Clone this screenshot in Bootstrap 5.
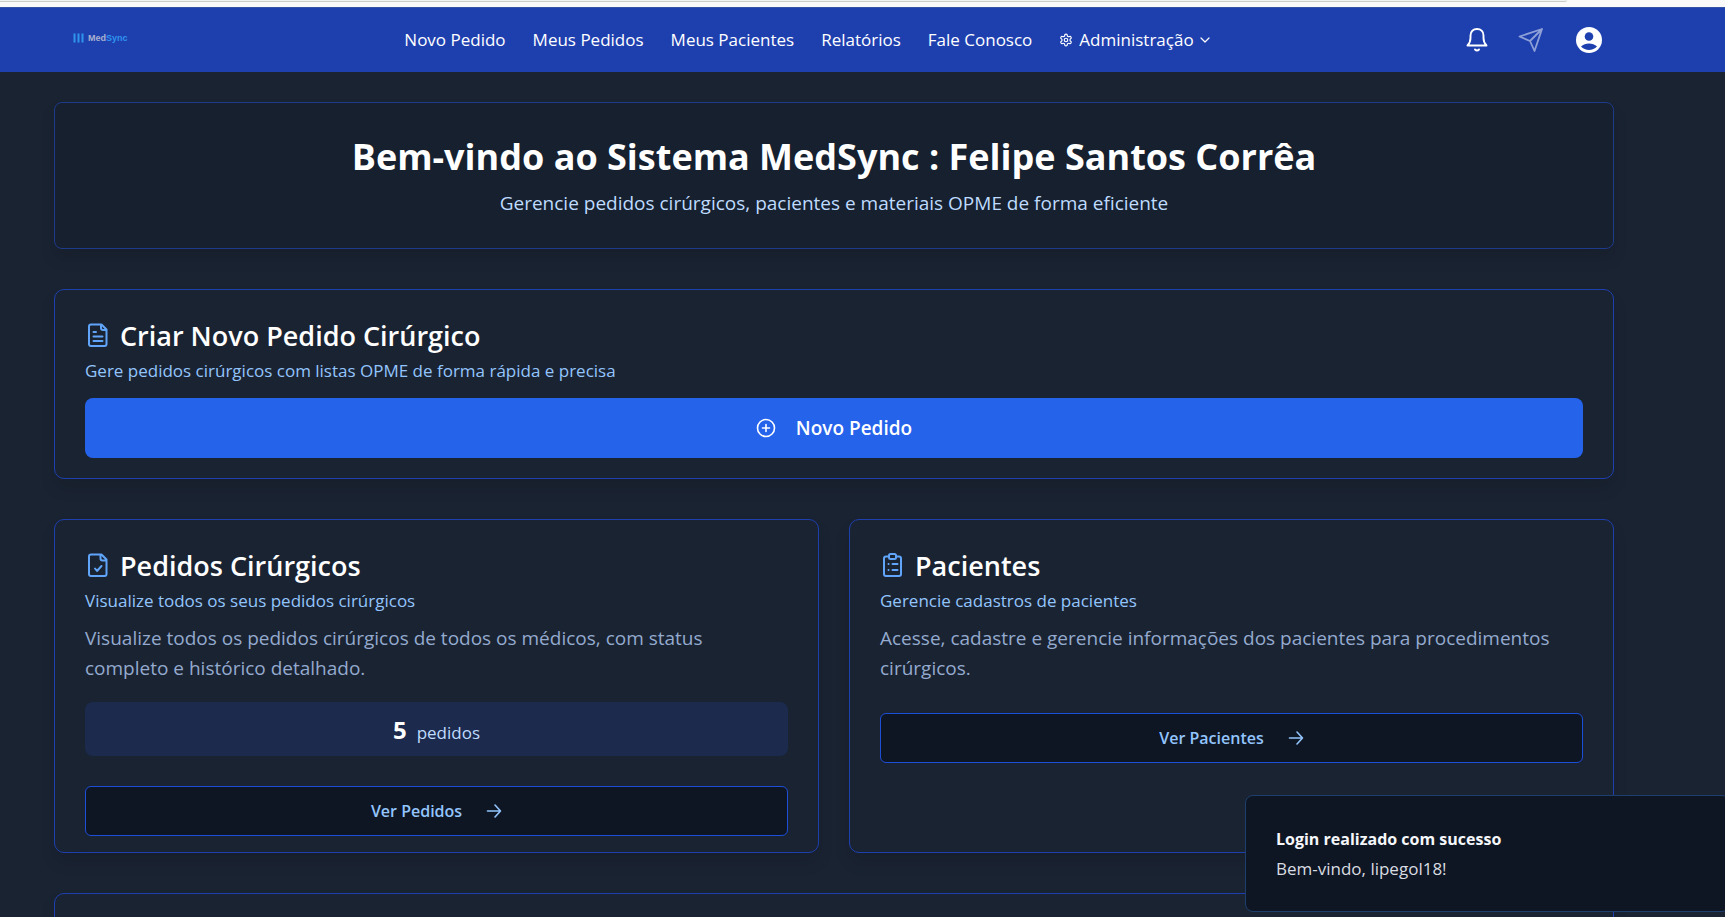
<!DOCTYPE html>
<html lang="pt-BR">
<head>
<meta charset="utf-8">
<meta name="viewport" content="width=device-width, initial-scale=1">
<title>MedSync</title>
<link href="https://cdn.jsdelivr.net/npm/bootstrap@5.3.0/dist/css/bootstrap.min.css" rel="stylesheet">
<style>
  body { background: #1a2332; color: #fff; font-family: "Open Sans", "Noto Sans", sans-serif; font-size: 17px; line-height: 24px; overflow: hidden; }
  svg { fill: none; stroke: currentColor; stroke-linecap: round; stroke-linejoin: round; flex-shrink: 0; }
  svg.solid { stroke: none; }
  .tab-strip { height: 7px; background: #f8f9f8; }
  .tab-line { height: 2px; margin-right: 158px; border-bottom: 1px solid #c9cdc9; background: #f1f3f1; border-bottom-right-radius: 8px; }
  .topbar { background: #1e40af; height: 65px; padding: 0 123px 0 73px; border-top: 1px solid #3451a8; }
  .brand { font: bold 9px/12px "Liberation Sans", sans-serif; color: #a9b2cf; text-decoration: none; gap: 4px; width: 77px; padding-bottom: 4px; }
  .brand span span { color: #2f94ee; }
  .menu { gap: 27px; }
  .menu .nav-link, .menu button { color: #fff; padding: 0; white-space: nowrap; }
  .menu button { background: none; border: 0; gap: 6px; }
  .tools { gap: 28px; }
  .tools button { background: none; border: 0; padding: 0; color: #fff; line-height: 0; }
  .tools .send { color: #8fa0d7; }
  main { padding: 30px 111px 0 54px; }
  .panel { border: 1px solid #1e40af; border-radius: 10px; padding: 30px 30px 20px; box-shadow: 0 10px 15px rgba(0,0,0,.1); background: #1a2332; color: #fff; margin-bottom: 40px; }
  .hero { background: #16202e; border-color: #1e3a8a; border-radius: 8px; padding: 30px; height: 147px; }
  .hero h1 { font-size: 36px; line-height: 48px; font-weight: 700; margin: 0 0 10px; }
  .hero p { font-size: 19px; line-height: 24px; color: #bfdbfe; margin: 0; }
  .panel h2 { font-size: 27px; line-height: 32px; font-weight: 600; margin: 0; gap: 9px; color: #fff; }
  .panel h2 svg { color: #60a5fa; margin-bottom: 2px; }
  .hint { color: #93c5fd; margin: 7px 0 0; }
  .desc { color: #94aace; font-size: 19px; line-height: 30px; margin: 10px 0 0; }
  .btn-new { background: #2563eb; color: #fff; font-size: 19px; font-weight: 600; height: 60px; border-radius: 8px; gap: 20px; margin-top: 15px; }
  .btn-new:hover { background: #1d4ed8; color: #fff; }
  .btn-go { background: #0f1623; color: #93c5fd; border: 1px solid #1d4ed8; font-size: 16px; font-weight: 600; height: 50px; border-radius: 6px; gap: 24px; margin-top: 30px; }
  .btn-go:hover { background: #16203a; color: #93c5fd; }
  .tally { background: #1c2a4e; border-radius: 8px; height: 54px; margin-top: 19px; gap: 10px; color: #bfdbfe; }
  .tally strong { font-size: 24px; font-weight: 700; color: #fff; }
  .pair { --bs-gutter-x: 30px; }
  .pair .panel { height: 334px; }
  .notice { position: fixed; right: -5px; bottom: 5px; width: 485px; height: 117px; background: #0f1623; border: 1px solid #1e3f6e; border-radius: 8px; padding: 28px 30px; line-height: 30px; color: #d9dce1; }
  .notice strong { font-size: 16px; font-weight: 700; color: #f5f7fa; }
</style>
</head>
<body>
<div class="tab-strip"><div class="tab-line"></div></div>
<header class="topbar d-flex align-items-center justify-content-between">
  <a href="#" class="brand d-flex align-items-center">
    <svg class="solid" width="11" height="10" viewBox="0 0 11 10"><path fill="#2f94ee" d="M.5 0.500h2v9h-2zM4.500 0.500h2v9h-2zM8.500 0.500h2v9h-2z"/></svg>
    <span>Med<span>Sync</span></span></a>
  <nav class="menu nav align-items-center flex-nowrap">
    <a class="nav-link" href="#">Novo Pedido</a>
    <a class="nav-link" href="#">Meus Pedidos</a>
    <a class="nav-link" href="#">Meus Pacientes</a>
    <a class="nav-link" href="#">Relatórios</a>
    <a class="nav-link" href="#">Fale Conosco</a>
    <button type="button" class="d-flex align-items-center">
      <svg width="14" height="14" viewBox="0 0 24 24" stroke-width="2"><path d="M12.22 2h-.44a2 2 0 0 0-2 2v.18a2 2 0 0 1-1 1.730l-.43.25a2 2 0 0 1-2 0l-.15-.08a2 2 0 0 0-2.730.73l-.22.38a2 2 0 0 0 .73 2.730l.15.1a2 2 0 0 1 1 1.720v.51a2 2 0 0 1-1 1.740l-.15.09a2 2 0 0 0-.73 2.730l.22.38a2 2 0 0 0 2.730.73l.15-.08a2 2 0 0 1 2 0l.43.25a2 2 0 0 1 1 1.730V20a2 2 0 0 0 2 2h.44a2 2 0 0 0 2-2v-.18a2 2 0 0 1 1-1.730l.43-.25a2 2 0 0 1 2 0l.15.08a2 2 0 0 0 2.730-.73l.22-.39a2 2 0 0 0-.73-2.730l-.15-.08a2 2 0 0 1-1-1.740v-.5a2 2 0 0 1 1-1.740l.15-.09a2 2 0 0 0 .73-2.730l-.22-.38a2 2 0 0 0-2.730-.73l-.15.08a2 2 0 0 1-2 0l-.43-.25a2 2 0 0 1-1-1.730V4a2 2 0 0 0-2-2z"/><circle cx="12" cy="12" r="3"/></svg>
      Administração
      <svg width="10" height="10" viewBox="0 0 10 10" stroke-width="1.200"><path d="M1 3l4 4 4-4"/></svg>
    </button>
  </nav>
  <div class="tools d-flex align-items-center">
    <button type="button" aria-label="Notificações"><svg width="26" height="26" viewBox="0 0 26 26" stroke-width="1.900"><path d="M3.500 18.500c2-2 3-4 3-7.500V8.500c0-4 2.700-6.500 6.500-6.500s6.500 2.500 6.500 6.500V11c0 3.500 1 5.500 3 7.500zM11 22.500q2 2 4 0"/></svg></button>
    <button type="button" class="send" aria-label="Enviar"><svg width="26" height="26" viewBox="0 0 26 26" stroke-width="1.800"><path d="M24 2L1.500 9.500l10.500 4.500 4.500 10zM24 2L12 14"/></svg></button>
    <button type="button" class="ms-1" aria-label="Perfil"><svg class="solid" width="26" height="26" viewBox="0 0 26 26"><circle cx="13" cy="13" r="13" fill="#fff"/><circle cx="13" cy="9.500" r="4.300" fill="#1e40af"/><path fill="#1e40af" d="M5 19.500c2-2 5-3 8-3s6 1 8 3c-2 2.200-5 3.500-8 3.500s-6-1.300-8-3.500z"/></svg></button>
  </div>
</header>
<main>
  <section class="panel hero text-center">
    <h1>Bem-vindo ao Sistema MedSync : Felipe Santos Corrêa</h1>
    <p>Gerencie pedidos cirúrgicos, pacientes e materiais OPME de forma eficiente</p>
  </section>
  <section class="panel">
    <h2 class="d-flex align-items-center"><svg width="26" height="26" viewBox="0 0 26 26" stroke-width="2"><path d="M6 2.500h10.500l5 5V22q0 2-2 2h-13.500q-2 0-2-2V4.500q0-2 2-2zM16 2.500v3.500q0 2 2 2h3.500M8.500 10h2.500M8.500 14.500h9M8.500 19h9"/></svg>Criar Novo Pedido Cirúrgico</h2>
    <p class="hint">Gere pedidos cirúrgicos com listas OPME de forma rápida e precisa</p>
    <button type="button" class="btn btn-new w-100 d-flex align-items-center justify-content-center"><svg width="20" height="20" viewBox="0 0 20 20" stroke-width="1.600"><circle cx="10" cy="10" r="8.500"/><path d="M10 6.500v7M6.500 10h7"/></svg>Novo Pedido</button>
  </section>
  <div class="row pair">
    <div class="col-6"><section class="panel">
      <h2 class="d-flex align-items-center"><svg width="26" height="26" viewBox="0 0 26 26" stroke-width="2"><path d="M6 2.500h10.500l5 5V22q0 2-2 2h-13.500q-2 0-2-2V4.500q0-2 2-2zM15.500 2.500v4q0 2 2 2h4M10 16.500l2 2.500 4.500-5"/></svg>Pedidos Cirúrgicos</h2>
      <p class="hint">Visualize todos os seus pedidos cirúrgicos</p>
      <p class="desc">Visualize todos os pedidos cirúrgicos de todos os médicos, com status completo e histórico detalhado.</p>
      <div class="tally d-flex justify-content-center align-items-baseline pt-3"><strong>5</strong><span>pedidos</span></div>
      <button type="button" class="btn btn-go w-100 d-flex align-items-center justify-content-center">Ver Pedidos<svg width="16" height="16" viewBox="0 0 16 16" stroke-width="1.600"><path d="M1.500 8h13M9 2l5.500 6L9 14"/></svg></button>
    </section></div>
    <div class="col-6"><section class="panel">
      <h2 class="d-flex align-items-center"><svg width="26" height="26" viewBox="0 0 26 26" stroke-width="2"><path d="M9 4.500H6q-2 0-2 2V22q0 2 2 2h13q2 0 2-2V6.500q0-2-2-2h-3M10.500 2h4q1.500 0 1.500 1.500v2Q16 7 14.500 7h-4Q9 7 9 5.500v-2Q9 2 10.500 2zM8.500 12h.1M12.500 12h5M8.500 18h.1M12.500 18h5"/></svg>Pacientes</h2>
      <p class="hint">Gerencie cadastros de pacientes</p>
      <p class="desc">Acesse, cadastre e gerencie informações dos pacientes para procedimentos cirúrgicos.</p>
      <button type="button" class="btn btn-go w-100 d-flex align-items-center justify-content-center">Ver Pacientes<svg width="16" height="16" viewBox="0 0 16 16" stroke-width="1.600"><path d="M1.500 8h13M9 2l5.500 6L9 14"/></svg></button>
    </section></div>
  </div>
  <section class="panel"></section>
</main>
<div class="notice" role="status"><strong>Login realizado com sucesso</strong><div>Bem-vindo, lipegol18!</div></div>
<script src="https://cdn.jsdelivr.net/npm/bootstrap@5.3.0/dist/js/bootstrap.bundle.min.js"></script>
</body>
</html>
